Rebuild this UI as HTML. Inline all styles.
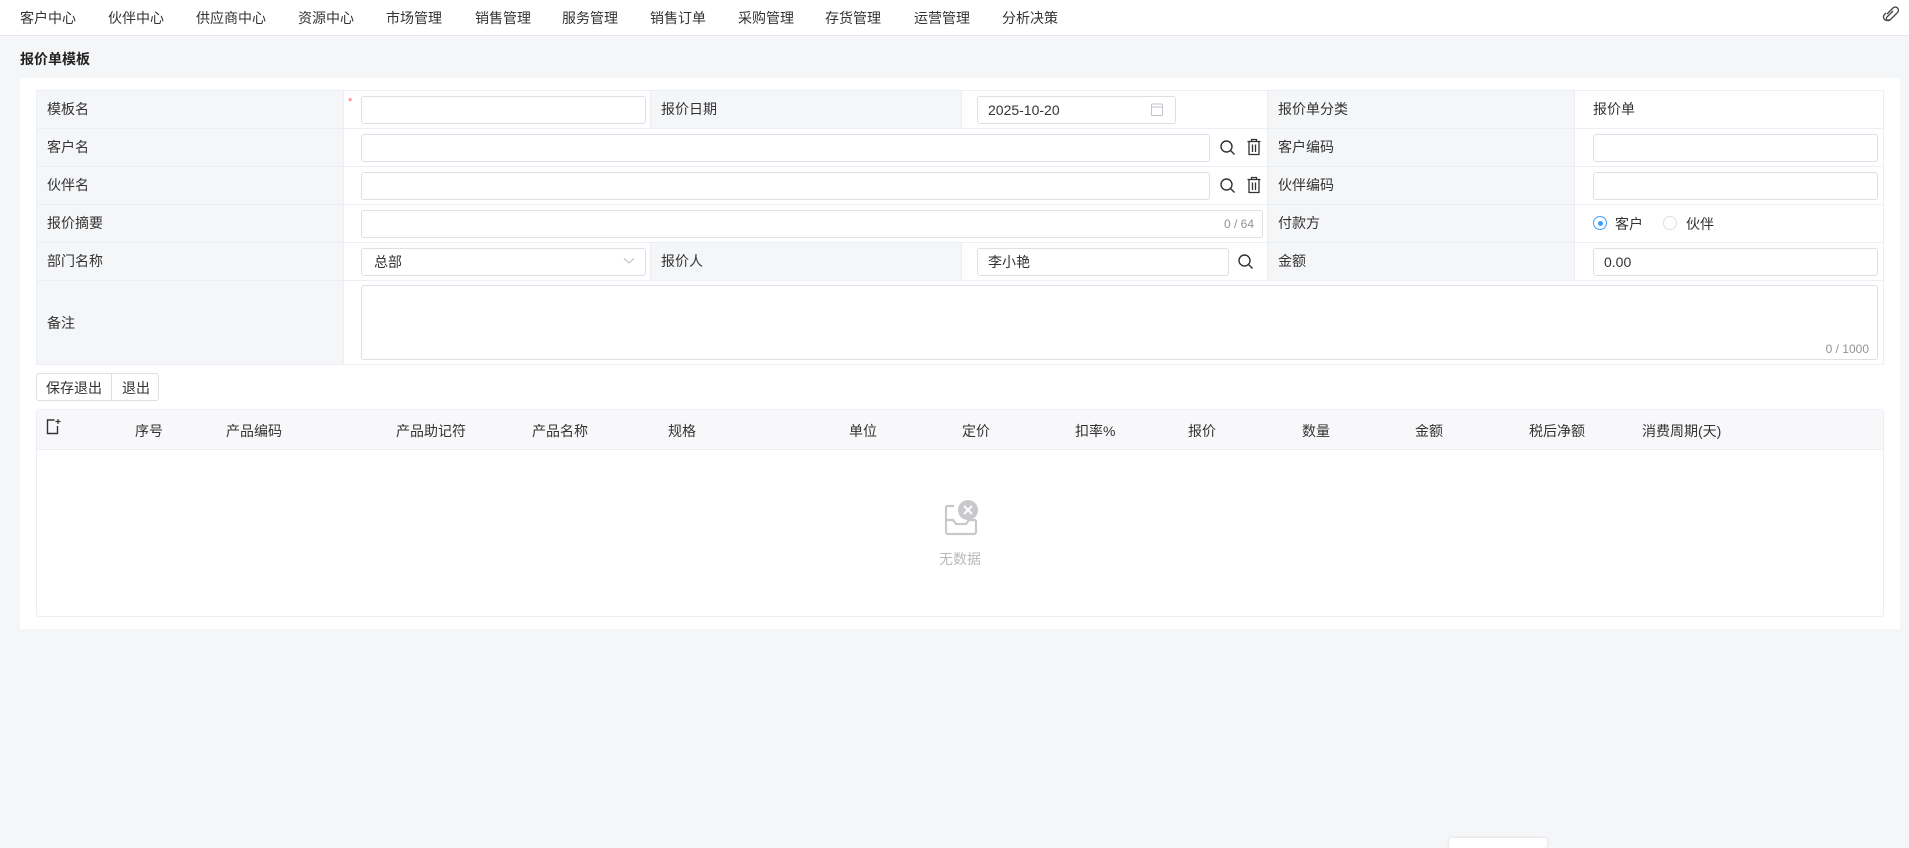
<!DOCTYPE html>
<html><head><meta charset="utf-8"><style>
*{box-sizing:border-box;margin:0;padding:0}
body{width:1909px;height:843px;background:#f5f6f8;font-family:"Liberation Sans","Noto Sans CJK SC",sans-serif;font-size:14px;color:#333;position:relative;overflow:hidden}
.a{position:absolute}
.nav{left:0;top:0;width:1909px;height:36px;background:#fff;border-bottom:1px solid #e4e7ed}
.nav span{position:absolute;top:8px;font-size:14px;color:#333}
.card{left:20px;top:78px;width:1880px;height:551px;background:#fff}
.lab{background:#f5f6f8;border-right:1px solid #ebeef5;border-bottom:1px solid #ebeef5;padding-left:10px;line-height:37px;color:#333}
.val{border-right:1px solid #ebeef5;border-bottom:1px solid #ebeef5;background:#fff}
.inp{border:1px solid #dcdfe6;border-radius:3px;background:#fff;height:28px;line-height:26px;padding-left:10px;color:#333}
.cnt{position:absolute;right:8px;top:0;font-size:12px;color:#909399}
.th{top:421px;font-weight:normal;color:#333}
</style></head><body>
<div class="a nav">
<span style="left:20px">客户中心</span><span style="left:108px">伙伴中心</span><span style="left:196px">供应商中心</span><span style="left:298px">资源中心</span><span style="left:386px">市场管理</span><span style="left:475px">销售管理</span><span style="left:562px">服务管理</span><span style="left:650px">销售订单</span><span style="left:738px">采购管理</span><span style="left:825px">存货管理</span><span style="left:914px">运营管理</span><span style="left:1002px">分析决策</span>
<svg class="a" style="left:1882px;top:5px" width="18" height="20" viewBox="0 0 18 20"><path d="M5 9 L11 3 A3 3 0 0 1 15.5 7.5 L8 15 A2 2 0 0 1 5 12 L11 6" fill="none" stroke="#444" stroke-width="1.3"/><path d="M4 8 L2.5 9.5 A3.5 3.5 0 0 0 7.5 14.5" fill="none" stroke="#444" stroke-width="1.3"/></svg>
</div>
<div class="a" style="left:20px;top:49px;font-weight:bold;font-size:14px;color:#222">报价单模板</div>
<div class="a card"></div>
<!-- table outer -->
<div class="a" style="left:36px;top:90px;width:1848px;height:275px;border-top:1px solid #ebeef5;border-left:1px solid #ebeef5;border-right:1px solid #ebeef5"></div>
<!-- row1 -->
<div class="a lab" style="left:37px;top:91px;width:307px;height:38px">模板名</div>
<div class="a val" style="left:344px;top:91px;width:307px;height:38px"></div>
<div class="a" style="left:348px;top:96px;color:#f56c6c;font-size:11px">*</div>
<div class="a inp" style="left:361px;top:96px;width:285px"></div>
<div class="a lab" style="left:651px;top:91px;width:311px;height:38px">报价日期</div>
<div class="a val" style="left:962px;top:91px;width:306px;height:38px"></div>
<div class="a inp" style="left:977px;top:96px;width:199px">2025-10-20</div>
<svg class="a" style="left:1151px;top:103px" width="12" height="13" viewBox="0 0 12 13"><rect x="0.5" y="1" width="11" height="11.5" rx="1" fill="none" stroke="#c0c4cc"/><line x1="0.5" y1="4" x2="11.5" y2="4" stroke="#c0c4cc"/></svg>
<div class="a lab" style="left:1268px;top:91px;width:307px;height:38px">报价单分类</div>
<div class="a val" style="left:1575px;top:91px;width:309px;height:38px;padding-left:18px;line-height:37px">报价单</div>
<!-- row2 -->
<div class="a lab" style="left:37px;top:129px;width:307px;height:38px">客户名</div>
<div class="a val" style="left:344px;top:129px;width:924px;height:38px"></div>
<div class="a inp" style="left:361px;top:134px;width:849px"></div>
<div class="a lab" style="left:1268px;top:129px;width:307px;height:38px">客户编码</div>
<div class="a val" style="left:1575px;top:129px;width:309px;height:38px"></div>
<div class="a inp" style="left:1593px;top:134px;width:285px"></div>
<!-- row3 -->
<div class="a lab" style="left:37px;top:167px;width:307px;height:38px">伙伴名</div>
<div class="a val" style="left:344px;top:167px;width:924px;height:38px"></div>
<div class="a inp" style="left:361px;top:172px;width:849px"></div>
<div class="a lab" style="left:1268px;top:167px;width:307px;height:38px">伙伴编码</div>
<div class="a val" style="left:1575px;top:167px;width:309px;height:38px"></div>
<div class="a inp" style="left:1593px;top:172px;width:285px"></div>
<!-- row4 -->
<div class="a lab" style="left:37px;top:205px;width:307px;height:38px">报价摘要</div>
<div class="a val" style="left:344px;top:205px;width:924px;height:38px"></div>
<div class="a inp" style="left:361px;top:210px;width:902px"><span class="cnt">0 / 64</span></div>
<div class="a lab" style="left:1268px;top:205px;width:307px;height:38px">付款方</div>
<div class="a val" style="left:1575px;top:205px;width:309px;height:38px"></div>
<div class="a" style="left:1593px;top:216px;width:14px;height:14px;border-radius:50%;border:1px solid #409eff;background:#fff"><div style="position:absolute;left:3.5px;top:3.5px;width:5px;height:5px;border-radius:50%;background:#409eff"></div></div>
<div class="a" style="left:1615px;top:214px">客户</div>
<div class="a" style="left:1663px;top:216px;width:14px;height:14px;border-radius:50%;border:1px solid #dcdfe6"></div>
<div class="a" style="left:1686px;top:214px">伙伴</div>
<!-- row5 -->
<div class="a lab" style="left:37px;top:243px;width:307px;height:38px">部门名称</div>
<div class="a val" style="left:344px;top:243px;width:307px;height:38px"></div>
<div class="a inp" style="left:361px;top:248px;width:285px;padding-left:12px">总部</div>
<svg class="a" style="left:623px;top:257px" width="12" height="8" viewBox="0 0 12 8"><path d="M1 1.5 L6 6 L11 1.5" fill="none" stroke="#c0c4cc" stroke-width="1.2"/></svg>
<div class="a lab" style="left:651px;top:243px;width:311px;height:38px">报价人</div>
<div class="a val" style="left:962px;top:243px;width:306px;height:38px"></div>
<div class="a inp" style="left:977px;top:248px;width:252px">李小艳</div>
<div class="a lab" style="left:1268px;top:243px;width:307px;height:38px">金额</div>
<div class="a val" style="left:1575px;top:243px;width:309px;height:38px"></div>
<div class="a inp" style="left:1593px;top:248px;width:285px">0.00</div>
<!-- row6 -->
<div class="a lab" style="left:37px;top:281px;width:307px;height:84px;line-height:84px">备注</div>
<div class="a val" style="left:344px;top:281px;width:1540px;height:84px"></div>
<div class="a inp" style="left:361px;top:285px;width:1517px;height:75px"><span class="cnt" style="top:auto;bottom:2px;line-height:16px">0 / 1000</span></div>
<!-- icons -->
<svg class="a" style="left:1219px;top:139px" width="18" height="18" viewBox="0 0 18 18"><circle cx="7.5" cy="7.5" r="5.5" fill="none" stroke="#333" stroke-width="1.4"/><line x1="11.5" y1="11.5" x2="15.5" y2="15.5" stroke="#333" stroke-width="1.4"/></svg>
<svg class="a" style="left:1246px;top:138px" width="16" height="18" viewBox="0 0 16 18"><path d="M1.5 3.5 H14.5 M5.5 3.5 V1.5 H10.5 V3.5 M3 3.5 V16.5 H13 V3.5 M6.5 6.5 V14 M9.5 6.5 V14" fill="none" stroke="#333" stroke-width="1.3"/></svg>
<svg class="a" style="left:1219px;top:177px" width="18" height="18" viewBox="0 0 18 18"><circle cx="7.5" cy="7.5" r="5.5" fill="none" stroke="#333" stroke-width="1.4"/><line x1="11.5" y1="11.5" x2="15.5" y2="15.5" stroke="#333" stroke-width="1.4"/></svg>
<svg class="a" style="left:1246px;top:176px" width="16" height="18" viewBox="0 0 16 18"><path d="M1.5 3.5 H14.5 M5.5 3.5 V1.5 H10.5 V3.5 M3 3.5 V16.5 H13 V3.5 M6.5 6.5 V14 M9.5 6.5 V14" fill="none" stroke="#333" stroke-width="1.3"/></svg>
<svg class="a" style="left:1237px;top:253px" width="18" height="18" viewBox="0 0 18 18"><circle cx="7.5" cy="7.5" r="5.5" fill="none" stroke="#333" stroke-width="1.4"/><line x1="11.5" y1="11.5" x2="15.5" y2="15.5" stroke="#333" stroke-width="1.4"/></svg>
<!-- buttons -->
<div class="a" style="left:36px;top:373px;width:123px;height:28px;border:1px solid #dcdfe6;border-radius:3px;background:#fff"></div>
<div class="a" style="left:111px;top:373px;width:1px;height:28px;background:#dcdfe6"></div>
<div class="a" style="left:46px;top:378px">保存退出</div>
<div class="a" style="left:122px;top:378px">退出</div>
<!-- product table -->
<div class="a" style="left:36px;top:409px;width:1848px;height:208px;border:1px solid #ebeef5;border-radius:3px;background:#fff"></div>
<div class="a" style="left:37px;top:410px;width:1846px;height:40px;background:#f8f8fa;border-bottom:1px solid #ebeef5"></div>
<svg class="a" style="left:46px;top:418px" width="16" height="17" viewBox="0 0 16 17"><path d="M8.5 2 H1.5 V15.5 H11.5 V8" fill="none" stroke="#333" stroke-width="1.4"/><path d="M12 1 V6 M9.5 3.5 H14.5" stroke="#333" stroke-width="1.2"/></svg>
<div class="a th" style="left:135px">序号</div>
<div class="a th" style="left:226px">产品编码</div>
<div class="a th" style="left:396px">产品助记符</div>
<div class="a th" style="left:532px">产品名称</div>
<div class="a th" style="left:668px">规格</div>
<div class="a th" style="left:849px">单位</div>
<div class="a th" style="left:962px">定价</div>
<div class="a th" style="left:1075px">扣率%</div>
<div class="a th" style="left:1188px">报价</div>
<div class="a th" style="left:1302px">数量</div>
<div class="a th" style="left:1415px">金额</div>
<div class="a th" style="left:1529px">税后净额</div>
<div class="a th" style="left:1642px">消费周期(天)</div>
<svg class="a" style="left:940px;top:498px" width="40" height="40" viewBox="0 0 40 40"><path d="M6 8 H14 M6 8 V34 A2 2 0 0 0 8 36 H34 A2 2 0 0 0 36 34 V22 M6 22 H13 L16 26 H26 L29 22 H36" fill="none" stroke="#c8c9cc" stroke-width="2.2"/><circle cx="28" cy="12" r="10" fill="#c8c9cc"/><path d="M24 8 L32 16 M32 8 L24 16" stroke="#fff" stroke-width="2"/></svg>
<div class="a" style="left:939px;top:549px;color:#b8b9bc">无数据</div>
<div class="a" style="left:1449px;top:838px;width:98px;height:10px;background:#fff;border-radius:3px;box-shadow:0 0 3px rgba(0,0,0,.12)"></div>
</body></html>
